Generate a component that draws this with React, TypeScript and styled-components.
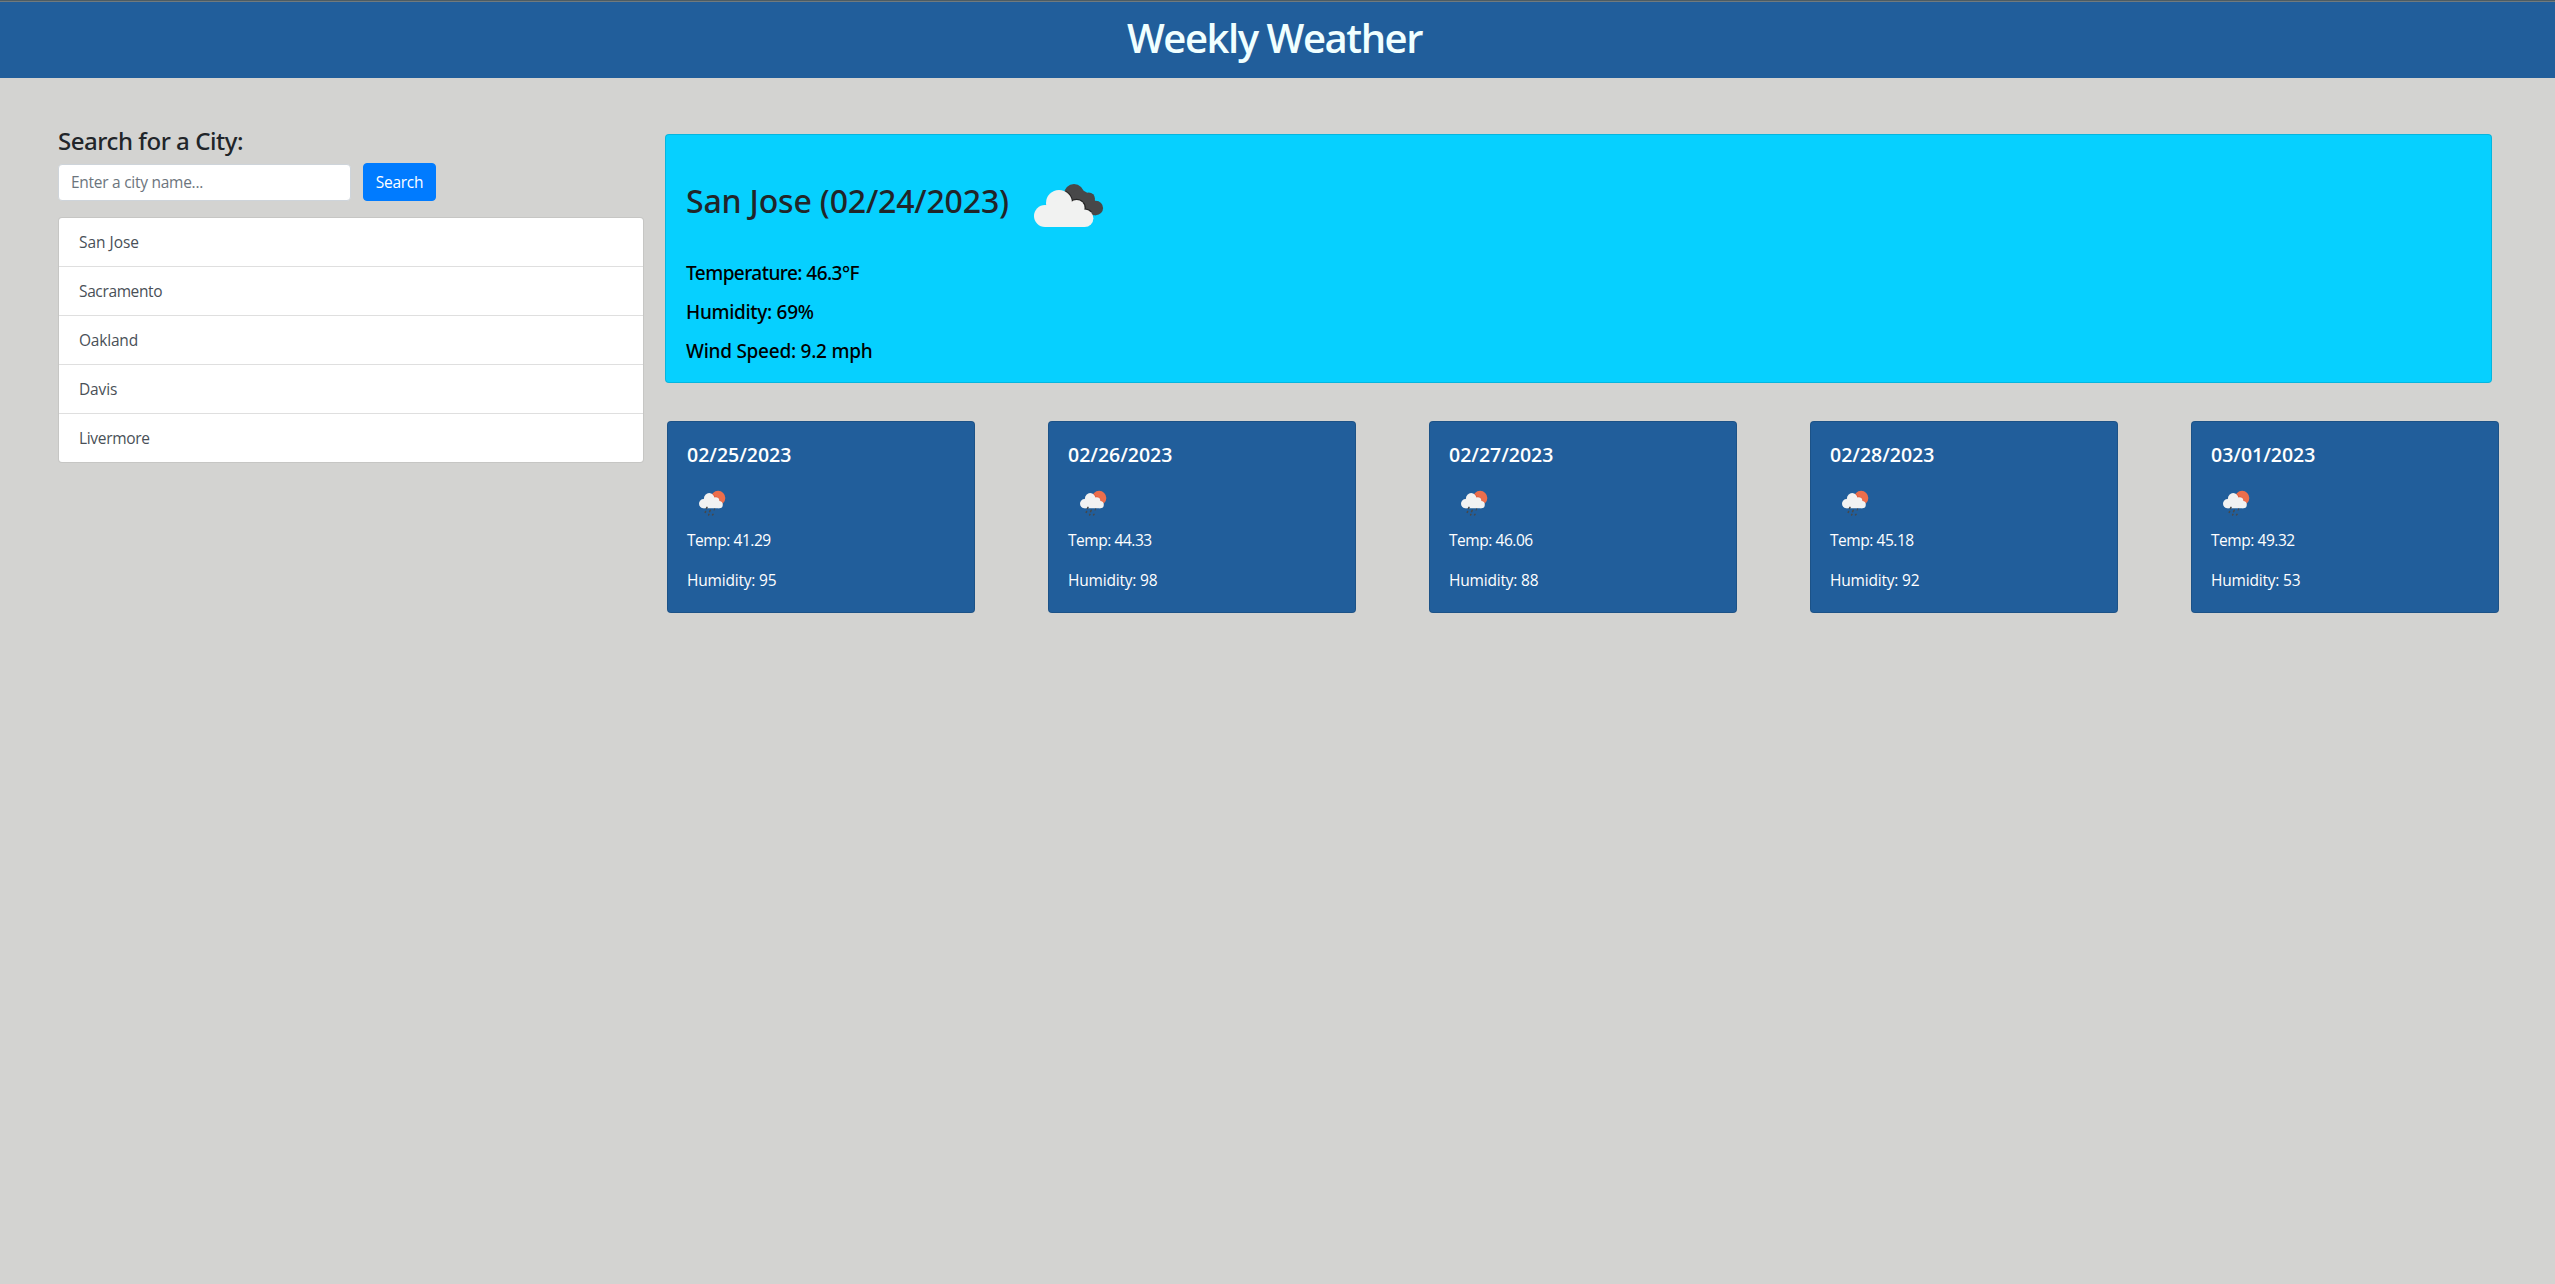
import React from 'react';
import styled, { createGlobalStyle } from 'styled-components';

const GlobalStyle = createGlobalStyle`
  *, *::before, *::after { box-sizing: border-box; }
  body {
    margin: 0;
    min-height: 100vh;
    background: #d3d3d1;
    color: #212529;
    font: 400 15.5px/24px "Segoe UI", "Open Sans", "Noto Sans", sans-serif;
  }
  h1, h2, h3, h4, p, ul { margin: 0; padding: 0; }
`;

const mediumFont = '"Segoe UI", "Noto Sans", "Open Sans", sans-serif';

const Header = styled.header`
  height: 78px;
  padding: 11px 6px 0 0;
  border-top: 1px solid #4c5c64;
  background: #215e9b;
  box-shadow: inset 0 1px 0 #707a7e;
  text-align: center;
`;

const PageTitle = styled.h1`
  padding-top: 2px;
  color: #f0ffff;
  font-size: 40px;
  font-weight: 600;
  line-height: 48px;
  letter-spacing: -1.45px;
`;

const Main = styled.main`
  display: grid;
  grid-template-columns: 586px 1827px;
  column-gap: 21px;
  padding: 48px 0 0 58px;
`;

const Sidebar = styled.aside`
  display: flex;
  flex-direction: column;
`;

const SearchTitle = styled.h3`
  margin-bottom: 8px;
  font-family: ${mediumFont};
  font-size: 24px;
  font-weight: 500;
  line-height: 29px;
  letter-spacing: -0.45px;
`;

const SearchForm = styled.form`
  display: flex;
  align-items: center;
  gap: 12px;
  margin-bottom: 16px;
`;

const CityInput = styled.input`
  width: 293px;
  height: 37px;
  padding: 0 12px;
  border: 1px solid #ced4da;
  border-radius: 4px;
  background: #fff;
  font: inherit;
  letter-spacing: -0.27px;
  &::placeholder { color: #6c757d; opacity: 1; }
`;

const SearchButton = styled.button`
  width: 73px;
  height: 38px;
  padding: 0;
  border: 1px solid #007bff;
  border-radius: 4px;
  background: #007bff;
  color: #fff;
  font: inherit;
  letter-spacing: -0.25px;
`;

const CityList = styled.ul`
  list-style: none;
  border: 1px solid rgba(0, 0, 0, 0.06);
  border-radius: 4px;
  background: #fff;
  background-clip: padding-box;
`;

const CityItem = styled.li<{ $tracking: number }>`
  height: 49px;
  padding: 12px 20px;
  border-bottom: 1px solid #dfdfdf;
  color: #495057;
  letter-spacing: ${(p) => p.$tracking}px;
  &:last-child { height: 48px; border-bottom: 0; }
`;

const Content = styled.section`
  padding-top: 8px;
`;

const CurrentCard = styled.article`
  height: 249px;
  padding: 20px;
  border: 1px solid rgba(0, 0, 0, 0.125);
  border-radius: 4px;
  background: #06d0ff;
`;

const CurrentHead = styled.div`
  display: flex;
  align-items: center;
  gap: 11px;
  height: 100px;
  margin-bottom: 6px;
`;

const CurrentTitle = styled.h2`
  width: 322px;
  padding-bottom: 8px;
  font-family: ${mediumFont};
  font-size: 32px;
  font-weight: 500;
  line-height: 38px;
  letter-spacing: -0.17px;
  white-space: nowrap;
`;

const Stat = styled.p<{ $tracking: number }>`
  color: #000;
  font-family: ${mediumFont};
  font-size: 19px;
  font-weight: 500;
  line-height: 24px;
  letter-spacing: ${(p) => p.$tracking}px;
  & + & { margin-top: 15px; }
`;

const Forecast = styled.div`
  display: flex;
  gap: 73px;
  margin: 38px -7px 0 2px;
`;

const DayCard = styled.article`
  flex: 1;
  height: 192px;
  padding: 21px 19px 19px;
  border: 1px solid rgba(0, 0, 0, 0.125);
  border-radius: 4px;
  background: #215e9b;
  color: #fff;
`;

const DayTitle = styled.h4`
  font-size: 19.5px;
  font-weight: 600;
  line-height: 24px;
`;

const DayText = styled.p<{ $tracking: number }>`
  letter-spacing: ${(p) => p.$tracking}px;
  & + & { margin-top: 16px; }
`;

const LargeIcon = styled.svg`
  flex: none;
  width: 100px;
  height: 100px;
`;

const SmallIcon = styled.svg`
  display: block;
  width: 50px;
  height: 50px;
  margin: 9px 0 2px;
`;

const BrokenClouds = () => (
  <LargeIcon viewBox="0 0 100 100" aria-label="broken clouds">
    <g fill="#484849">
      <circle cx="55" cy="39" r="10" />
      <circle cx="69.7" cy="43.7" r="6.3" />
      <circle cx="76.9" cy="53" r="7.2" />
      <path d="M50 40L60 33L72 40L77 47V60.2H60Z" />
    </g>
    <path
      d="M52.9 46.5A8.1 8.1 0 0 1 65.6 54.7A8.6 8.6 0 0 1 72 57.5"
      fill="none"
      stroke="#252525"
      strokeWidth="2.2"
    />
    <path d="M46.5 36.7A13 13 0 0 1 52.9 46.5" fill="none" stroke="#252525" strokeWidth="2.2" />
    <g fill="#f1f2f1">
      <circle cx="26" cy="61" r="11" />
      <circle cx="40" cy="48" r="13" />
      <circle cx="57.6" cy="53" r="8" />
      <circle cx="65.7" cy="63.3" r="8.7" />
      <path d="M26 52L40 44L58 50L65.7 58V72H26Z" />
    </g>
  </LargeIcon>
);

const DayRain = () => (
  <SmallIcon viewBox="0 0 50 50" aria-label="rain">
    <circle cx="31.1" cy="22" r="7.2" fill="#ec6e4c" />
    <path
      d="M25.5 18A6 6 0 0 1 27.6 21.2A4.2 4.2 0 0 1 32.7 25.3A3.5 3.5 0 0 1 35.5 27"
      fill="none"
      stroke="#dc4f2e"
      strokeWidth="1"
    />
    <g fill="#f2f2f2">
      <circle cx="16.6" cy="27.7" r="4.6" />
      <circle cx="22.2" cy="22.4" r="5.3" />
      <circle cx="28.7" cy="25" r="3.8" />
      <circle cx="32.2" cy="28.7" r="3.6" />
      <path d="M16.6 24L22 21L29 24L32.2 27V32.3H16.6Z" />
    </g>
    <g stroke="#484848" strokeWidth="1.5" strokeLinecap="round">
      <path d="M20 31.4L19.5 32.4M18.6 35.5L18.2 36.4M23.2 34.3L22.6 35.6M21.9 38.4L21.6 39M26 38.3L25.6 38.9" />
      <path d="M27.6 32.8L27.2 34.2" strokeWidth="1" />
    </g>
  </SmallIcon>
);

const cities = [
  { name: 'San Jose', tracking: -0.03 },
  { name: 'Sacramento', tracking: -0.37 },
  { name: 'Oakland', tracking: -0.2 },
  { name: 'Davis', tracking: -0.15 },
  { name: 'Livermore', tracking: -0.32 },
];

const stats = [
  { text: 'Temperature: 46.3°F', tracking: -0.54 },
  { text: 'Humidity: 69%', tracking: -0.3 },
  { text: 'Wind Speed: 9.2 mph', tracking: -0.25 },
];

const days = [
  { date: '02/25/2023', temp: '41.29', humidity: 95 },
  { date: '02/26/2023', temp: '44.33', humidity: 98 },
  { date: '02/27/2023', temp: '46.06', humidity: 88 },
  { date: '02/28/2023', temp: '45.18', humidity: 92 },
  { date: '03/01/2023', temp: '49.32', humidity: 53 },
];

export default function App() {
  return (
    <>
      <GlobalStyle />
      <Header>
        <PageTitle>Weekly Weather</PageTitle>
      </Header>
      <Main>
        <Sidebar>
          <SearchTitle>Search for a City:</SearchTitle>
          <SearchForm onSubmit={(e) => e.preventDefault()}>
            <CityInput placeholder="Enter a city name..." />
            <SearchButton type="submit">Search</SearchButton>
          </SearchForm>
          <CityList>
            {cities.map((c) => (
              <CityItem key={c.name} $tracking={c.tracking}>{c.name}</CityItem>
            ))}
          </CityList>
        </Sidebar>
        <Content>
          <CurrentCard>
            <CurrentHead>
              <CurrentTitle>San Jose (02/24/2023)</CurrentTitle>
              <BrokenClouds />
            </CurrentHead>
            {stats.map((s) => (
              <Stat key={s.text} $tracking={s.tracking}>{s.text}</Stat>
            ))}
          </CurrentCard>
          <Forecast>
            {days.map((d) => (
              <DayCard key={d.date}>
                <DayTitle>{d.date}</DayTitle>
                <DayRain />
                <DayText $tracking={-0.45}>{`Temp: ${d.temp}`}</DayText>
                <DayText $tracking={-0.2}>{`Humidity: ${d.humidity}`}</DayText>
              </DayCard>
            ))}
          </Forecast>
        </Content>
      </Main>
    </>
  );
}
